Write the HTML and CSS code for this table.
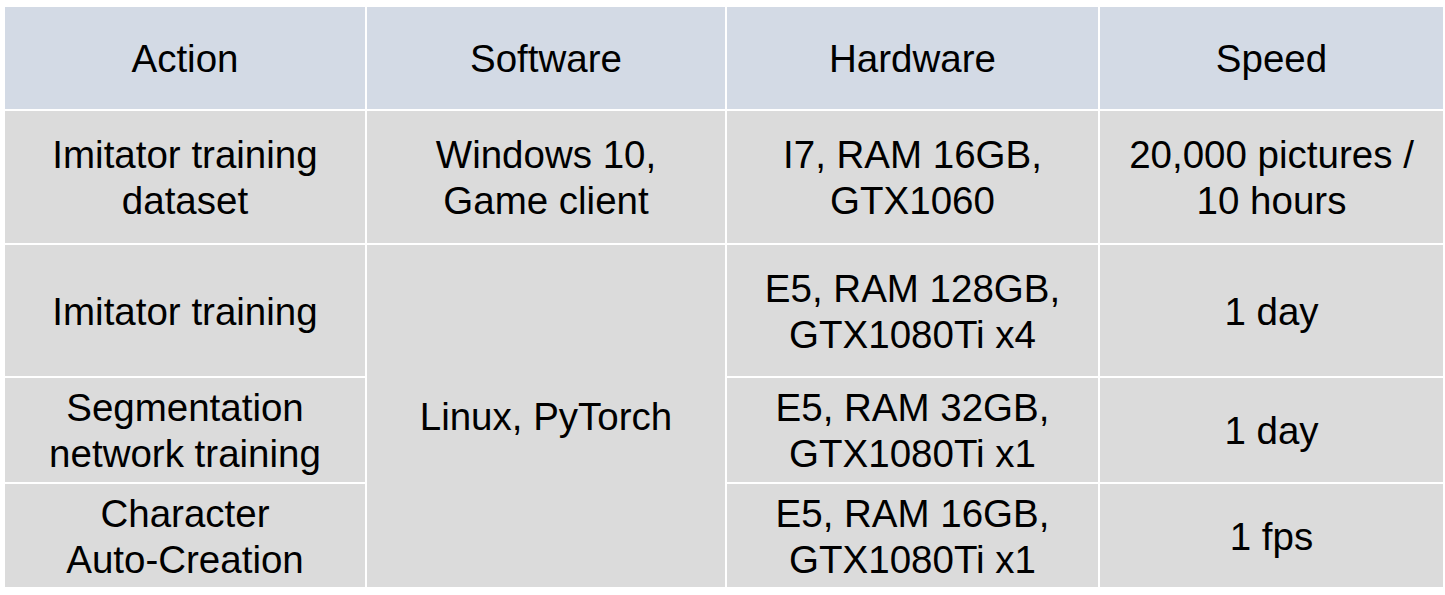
FILE: index.html
```html
<!DOCTYPE html>
<html>
<head>
<meta charset="utf-8">
<link rel="stylesheet" href="styles.css">
</head>
<body>
<table class="spec">
  <colgroup>
    <col class="c1"><col class="c2"><col class="c3"><col class="c4">
  </colgroup>
  <thead>
    <tr class="r0">
      <th>Action</th><th>Software</th><th>Hardware</th><th>Speed</th>
    </tr>
  </thead>
  <tbody>
    <tr class="r1">
      <td>Imitator training<br>dataset</td>
      <td>Windows 10,<br>Game client</td>
      <td>I7, RAM 16GB,<br>GTX1060</td>
      <td>20,000 pictures /<br>10 hours</td>
    </tr>
    <tr class="r2">
      <td>Imitator training</td>
      <td rowspan="3">Linux, PyTorch</td>
      <td>E5, RAM 128GB,<br>GTX1080Ti x4</td>
      <td>1 day</td>
    </tr>
    <tr class="r3">
      <td>Segmentation<br>network training</td>
      <td>E5, RAM 32GB,<br>GTX1080Ti x1</td>
      <td>1 day</td>
    </tr>
    <tr class="r4">
      <td>Character<br>Auto-Creation</td>
      <td>E5, RAM 16GB,<br>GTX1080Ti x1</td>
      <td>1 fps</td>
    </tr>
  </tbody>
</table>
</body>
</html>
```

FILE: styles.css
```css
html, body {
  margin: 0;
  padding: 0;
  background: #ffffff;
}
body {
  padding: 5px 0 0 3px;
  font-family: "Liberation Sans", Arial, sans-serif;
}
.spec {
  border-collapse: separate;
  border-spacing: 2px;
  table-layout: fixed;
  background: #ffffff;
  color: #000000;
  font-size: 38.5px;
  line-height: 46px;
}
.c1 { width: 360px; }
.c2 { width: 358px; }
.c3 { width: 371px; }
.c4 { width: 343px; }
.spec th, .spec td {
  padding: 2px 0 0 0;
  text-align: center;
  vertical-align: middle;
  font-weight: normal;
}
.spec th {
  background: #d3dae5;
}
.spec td {
  background: #dbdbdb;
}
.r0 { height: 102px; }
.r1 { height: 132px; }
.r2 { height: 131px; }
.r3 { height: 104px; }
.r4 { height: 103px; }
```
